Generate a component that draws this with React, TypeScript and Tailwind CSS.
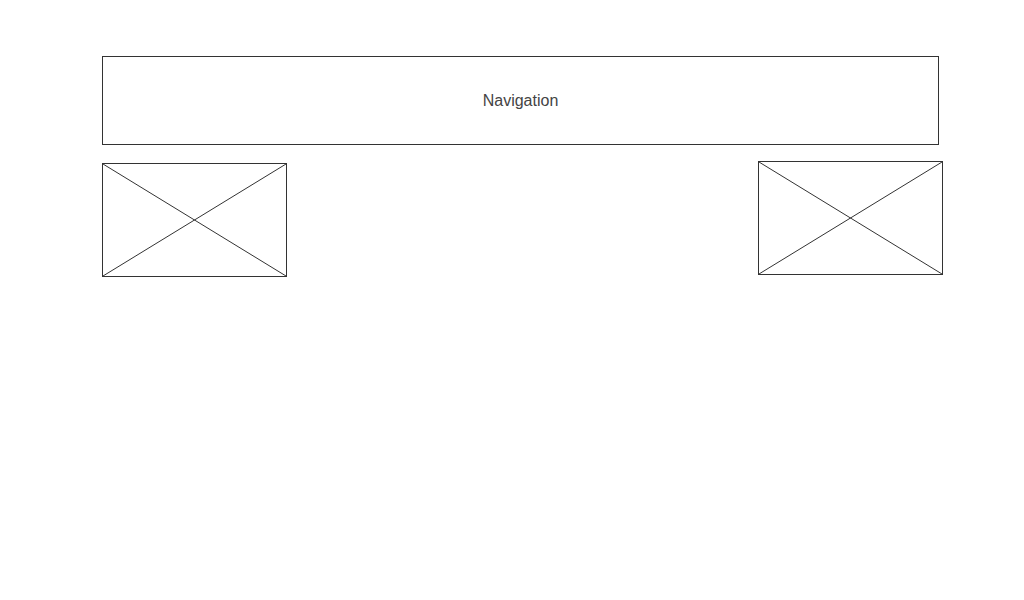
export default function App() {
  return (
    <div className="min-h-[600px] w-[1024px] bg-white pl-[102px] pt-[56px] font-['Liberation_Sans',Arial,sans-serif]">
      <div className="flex h-[89px] w-[837px] items-center justify-center border border-[#333333] text-[16px] text-[#444444]">
        Navigation
      </div>
      <div className="mt-[16px] flex w-[841px] items-start justify-between">
        <Placeholder className="mt-[2px]" />
        <Placeholder />
      </div>
    </div>
  );
}

function Placeholder({ className = '' }: { className?: string }) {
  return (
    <div className={`h-[114px] w-[185px] border border-[#333333] ${className}`}>
      <svg className="block h-full w-full" viewBox="0 0 183 112" preserveAspectRatio="none">
        <line x1="0" y1="0" x2="183" y2="112" stroke="#333333" strokeWidth="1" vectorEffect="non-scaling-stroke" />
        <line x1="183" y1="0" x2="0" y2="112" stroke="#333333" strokeWidth="1" vectorEffect="non-scaling-stroke" />
      </svg>
    </div>
  );
}
